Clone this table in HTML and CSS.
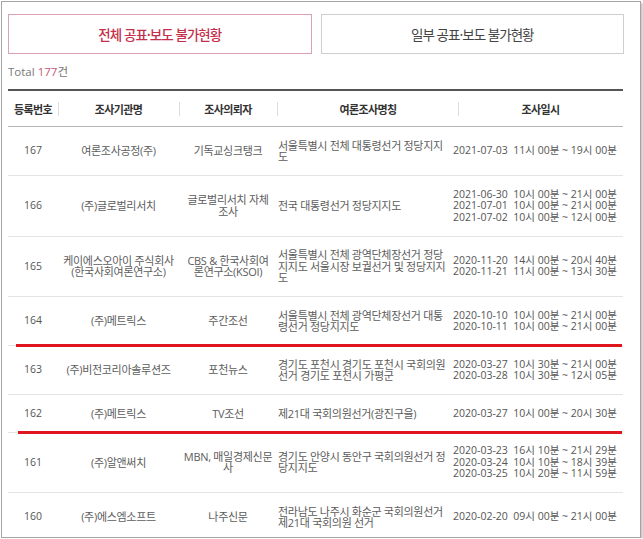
FILE: index.html
```html
<!DOCTYPE html>
<html lang="ko">
<head>
<meta charset="utf-8">
<title>공표·보도 불가현황</title>
<link rel="stylesheet" href="styles.css">
</head>
<body>
<div class="frame">
  <div class="tabs">
    <a class="tab tab-active">전체 공표·보도 불가현황</a>
    <a class="tab">일부 공표·보도 불가현황</a>
  </div>
  <p class="total">Total <span class="count">177</span>건</p>
  <table class="list">
    <colgroup>
      <col class="c-no"><col class="c-org"><col class="c-client"><col class="c-title"><col class="c-date">
    </colgroup>
    <thead>
      <tr>
        <th>등록번호</th><th>조사기관명</th><th>조사의뢰자</th><th class="th-title">여론조사명칭</th><th class="th-date">조사일시</th>
      </tr>
    </thead>
    <tbody>
      <tr>
        <td class="no">167</td><td class="ko">여론조사공정(주)</td><td class="ko">기독교싱크탱크</td>
        <td class="ko title">서울특별시 전체 대통령선거 정당지지<br>도</td>
        <td class="date">2021-07-03&nbsp; 11시 00분 ~ 19시 00분</td>
      </tr>
      <tr>
        <td class="no">166</td><td class="ko">(주)글로벌리서치</td><td class="ko">글로벌리서치 자체<br>조사</td>
        <td class="ko title">전국 대통령선거 정당지지도</td>
        <td class="date">2021-06-30&nbsp; 10시 00분 ~ 21시 00분<br>2021-07-01&nbsp; 10시 00분 ~ 21시 00분<br>2021-07-02&nbsp; 10시 00분 ~ 12시 00분</td>
      </tr>
      <tr>
        <td class="no">165</td><td class="ko">케이에스오아이 주식회사<br>(한국사회여론연구소)</td><td class="ko">CBS &amp; 한국사회여<br>론연구소(KSOI)</td>
        <td class="ko title">서울특별시 전체 광역단체장선거 정당<br>지지도 서울시장 보궐선거 및 정당지지<br>도</td>
        <td class="date">2020-11-20&nbsp; 14시 00분 ~ 20시 40분<br>2020-11-21&nbsp; 11시 00분 ~ 13시 30분</td>
      </tr>
      <tr>
        <td class="no">164</td><td class="ko">(주)메트릭스</td><td class="ko">주간조선</td>
        <td class="ko title">서울특별시 전체 광역단체장선거 대통<br>령선거 정당지지도</td>
        <td class="date">2020-10-10&nbsp; 10시 00분 ~ 21시 00분<br>2020-10-11&nbsp; 10시 00분 ~ 21시 00분</td>
      </tr>
      <tr class="marked">
        <td class="no">163</td><td class="ko">(주)비전코리아솔루션즈</td><td class="ko">포천뉴스</td>
        <td class="ko title">경기도 포천시 경기도 포천시 국회의원<br>선거 경기도 포천시 가평군</td>
        <td class="date">2020-03-27&nbsp; 10시 30분 ~ 21시 00분<br>2020-03-28&nbsp; 10시 30분 ~ 12시 05분</td>
      </tr>
      <tr>
        <td class="no">162</td><td class="ko">(주)메트릭스</td><td class="ko">TV조선</td>
        <td class="ko title">제21대 국회의원선거(광진구을)</td>
        <td class="date">2020-03-27&nbsp; 10시 00분 ~ 20시 30분</td>
      </tr>
      <tr class="marked marked-2">
        <td class="no">161</td><td class="ko">(주)알앤써치</td><td class="ko">MBN, 매일경제신문<br>사</td>
        <td class="ko title">경기도 안양시 동안구 국회의원선거 정<br>당지지도</td>
        <td class="date">2020-03-23&nbsp; 16시 10분 ~ 21시 29분<br>2020-03-24&nbsp; 10시 10분 ~ 18시 39분<br>2020-03-25&nbsp; 10시 20분 ~ 11시 59분</td>
      </tr>
      <tr>
        <td class="no">160</td><td class="ko">(주)에스엠소프트</td><td class="ko">나주신문</td>
        <td class="ko title">전라남도 나주시 화순군 국회의원선거<br>제21대 국회의원 선거</td>
        <td class="date">2020-02-20&nbsp; 09시 00분 ~ 21시 00분</td>
      </tr>
    </tbody>
  </table>
</div>
</body>
</html>
```

FILE: styles.css
```css
html, body {
  margin: 0;
  padding: 0;
  background: #fff;
}

body {
  font-family: "Open Sans", "Noto Sans CJK KR", sans-serif;
  color: #555;
}

.frame {
  box-sizing: border-box;
  width: 640px;
  height: 537px;
  margin: 1px 0 0 1px;
  border: 1px solid #a4a4a4;
  box-shadow: 2px 2px 2px rgba(0, 0, 0, 0.22);
  padding: 12px 16px 0 6px;
  overflow: hidden;
}

.tabs {
  display: flex;
  gap: 9px;
}

.tab {
  box-sizing: border-box;
  width: 304px;
  height: 40px;
  border: 1px solid #cfcfcf;
  display: flex;
  align-items: center;
  justify-content: center;
  font-family: "Noto Sans CJK KR", sans-serif;
  font-size: 13.5px;
  letter-spacing: -1px;
  color: #444;
}

.tab-active {
  border-color: #dba3b1;
  color: #c4304c;
  font-weight: 500;
}

.total {
  margin: 10px 0 9px;
  line-height: 16px;
  font-size: 11.5px;
  color: #777;
  font-family: "Open Sans", "Noto Sans CJK KR", sans-serif;
}

.count {
  color: #c45a75;
}

.list {
  width: 615px;
  border-collapse: collapse;
  table-layout: fixed;
  border-top: 2px solid #555;
}

.c-no { width: 50px; }
.c-org { width: 121px; }
.c-client { width: 98px; }
.c-title { width: 173px; }
.c-date { width: 173px; }

.list th {
  position: relative;
  height: 35px;
  padding: 0;
  border-bottom: 1px solid #b5b5b5;
  font-family: "Noto Sans CJK KR", sans-serif;
  font-size: 11px;
  font-weight: 700;
  letter-spacing: -0.6px;
  color: #333;
  text-align: center;
}

.list th + th::before {
  content: "";
  position: absolute;
  left: 0;
  top: 11px;
  width: 1px;
  height: 14px;
  background: #dcdcdc;
}

.list .th-title { padding-left: 9px; }
.list .th-date { padding-left: 8px; }
.list .th-date::before { left: 8px; }

.list td {
  position: relative;
  padding: 12.5px 0;
  border-bottom: 1px solid #e4e4e4;
  font-size: 10.5px;
  line-height: 11.5px;
  text-align: center;
  vertical-align: middle;
  white-space: nowrap;
}

.list td.ko {
  font-size: 11px;
  letter-spacing: -0.3px;
  color: #5c5c5c;
}

.list td.no {
  color: #555;
}

.list td.title {
  text-align: left;
  padding-left: 1px;
}

.list td.date {
  text-align: left;
  padding-left: 3px;
  color: #555;
}

.marked td.no::before {
  content: "";
  position: absolute;
  left: 8px;
  top: -2px;
  width: 606px;
  height: 3px;
  background: #e0161f;
}

.marked-2 td.no::before {
  left: 10px;
  width: 604px;
}
```
